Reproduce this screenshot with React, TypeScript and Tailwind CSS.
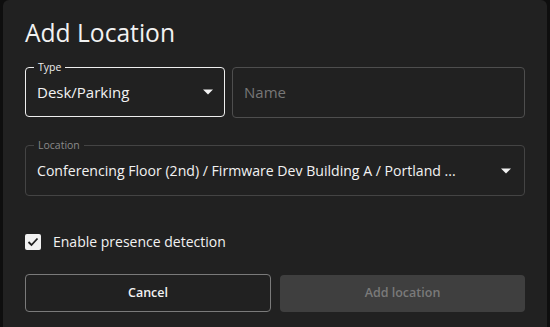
import React from 'react';

const Caret = () => (
  <svg width="10" height="6" viewBox="0 0 10 5" className="shrink-0">
    <path d="M0 0 L10 0 L5 5 Z" fill="#f2f2f2" />
  </svg>
);

export default function App() {
  return (
    <div className="w-[550px] h-[327px] bg-[#0e0e0e] overflow-hidden" style={{ fontFamily: '"Open Sans", "Noto Sans", sans-serif' }}>
      <div className="ml-[3px] w-[544px] h-[327px] bg-[#212121] rounded-t-[6px] px-[22px] pt-[16px]">
        <h1 className="text-[24.6px] leading-[34px] text-[#f2f2f2] font-normal">Add Location</h1>

        {/* Type + Name */}
        <div className="flex gap-[7px] mt-[17px]">
          <div className="relative w-[200px] h-[50px] border border-[#eeeeee] rounded-[4px] flex items-center justify-between pl-[11px] pr-[11px]">
            <span className="absolute -top-[8px] left-[8px] px-[4px] bg-[#212121] text-[10.5px] leading-[14px] text-[#eeeeee]">Type</span>
            <span className="text-[15px] text-[#f2f2f2]">Desk/Parking</span>
            <Caret />
          </div>
          <div className="flex-1 h-[51px] border border-[#4e4e4e] rounded-[4px] flex items-center pl-[11px]">
            <span className="text-[15px] text-[#777777]">Name</span>
          </div>
        </div>

        {/* Location */}
        <div className="relative mt-[27px] h-[51px] border border-[#444444] rounded-[4px] flex items-center justify-between pl-[11px] pr-[13px]">
          <span className="absolute -top-[8px] left-[8px] px-[4px] bg-[#212121] text-[10.5px] leading-[14px] text-[#8a8a8a]">Location</span>
          <span className="text-[14.1px] text-[#f2f2f2]">Conferencing Floor (2nd) / Firmware Dev Building A / Portland ...</span>
          <Caret />
        </div>

        {/* Checkbox */}
        <div className="flex items-center mt-[35px] gap-[12px]">
          <div className="w-[16px] h-[16px] bg-[#f2f2f2] rounded-[2px] flex items-center justify-center">
            <svg width="12" height="10" viewBox="0 0 12 10">
              <path d="M1.5 5 L4.5 8 L10.5 1.5" stroke="#212121" strokeWidth="1.8" fill="none" />
            </svg>
          </div>
          <span className="text-[14px] text-[#f2f2f2]">Enable presence detection</span>
        </div>

        {/* Buttons */}
        <div className="flex gap-[9px] mt-[22px]">
          <button className="w-[246px] h-[38px] border border-[#7a7a7a] rounded-[4px] text-[12.5px] font-semibold text-[#f2f2f2]">Cancel</button>
          <button className="flex-1 h-[37px] mt-[1px] bg-[#3f3f3f] rounded-[4px] text-[12.5px] font-semibold text-[#7a7a7a]">Add location</button>
        </div>
      </div>
    </div>
  );
}
